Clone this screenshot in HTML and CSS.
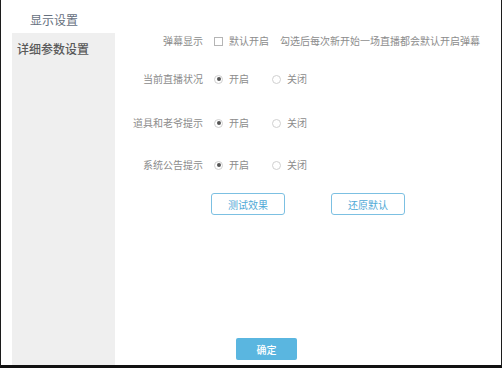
FILE: index.html
```html
<!DOCTYPE html>
<html lang="zh-CN">
<head>
    <meta charset="UTF-8">
    <title>显示设置</title>
    <link rel="stylesheet" href="styles.css">
</head>
<body>
    <div class="ventana">
        <div class="titulo-tab">显示设置</div>
        <div class="panel">
            <aside class="lateral">
                <div class="item-lateral">详细参数设置</div>
            </aside>
            <main class="contenido">
                <div class="fila">
                    <span class="etiqueta">弹幕显示</span>
                    <label class="opcion"><span class="check"></span>默认开启</label>
                    <span class="ayuda">勾选后每次新开始一场直播都会默认开启弹幕</span>
                </div>
                <div class="fila fila-2">
                    <span class="etiqueta">当前直播状况</span>
                    <label class="opcion radio-op"><span class="radio activo"></span>开启</label>
                    <label class="opcion"><span class="radio"></span>关闭</label>
                </div>
                <div class="fila fila-3">
                    <span class="etiqueta">道具和老爷提示</span>
                    <label class="opcion radio-op"><span class="radio activo"></span>开启</label>
                    <label class="opcion"><span class="radio"></span>关闭</label>
                </div>
                <div class="fila fila-4">
                    <span class="etiqueta">系统公告提示</span>
                    <label class="opcion radio-op"><span class="radio activo"></span>开启</label>
                    <label class="opcion"><span class="radio"></span>关闭</label>
                </div>
                <div class="acciones">
                    <button class="boton-linea">测试效果</button>
                    <button class="boton-linea">还原默认</button>
                </div>
                <div class="pie">
                    <button class="boton-ok">确定</button>
                </div>
            </main>
        </div>
    </div>
</body>
</html>
```

FILE: styles.css
```css
:root {
    --color-lateral: #efefef;
    --color-texto: #8c8c8c;
    --color-azul: #4fa9d6;
    --color-ok: #5ab6e0;
    --fuente: "Noto Sans CJK SC", "Noto Sans", sans-serif;
}

* {
    margin: 0; padding: 0; box-sizing: border-box;
}

body {
    font-family: var(--fuente);
    background: #fff;
}

.ventana {
    width: 502px; height: 368px;
    border-left: 1px solid #1c1c1c;
    border-right: 1px solid #1c1c1c;
    border-bottom: 3px solid #111;
    display: flex; flex-direction: column;
    background: #fff;
}

.titulo-tab {
    height: 33px; padding: 11px 0 0 29px;
    font-size: 12px; line-height: 18px;
    color: #66707e;
}

.panel {
    flex: 1; display: flex;
}

.lateral {
    width: 103px; margin-left: 11px;
    background: var(--color-lateral);
}

.item-lateral {
    padding: 7px 0 0 5px;
    font-size: 12px; line-height: 17px; font-weight: 500;
    color: #5a5a5a;
}

.contenido {
    flex: 1; display: flex; flex-direction: column;
    font-size: 10px; color: var(--color-texto);
}

.fila {
    display: flex; align-items: center;
    height: 16px; line-height: 16px;
}
.fila-2 { margin-top: 22px; }
.fila-3 { margin-top: 28px; }
.fila-4 { margin-top: 26px; }

.etiqueta {
    width: 88px; text-align: right;
    margin-right: 11px; white-space: nowrap;
}

.opcion {
    display: flex; align-items: center; gap: 6px;
}
.radio-op { width: 58px; }

.check {
    width: 9px; height: 9px;
    border: 1px solid #b5b5b5; background: #fff;
}

.radio {
    width: 9px; height: 9px; border-radius: 50%;
    border: 1px solid #d0d0d0; background: #fff;
    display: flex; align-items: center; justify-content: center;
}
.radio.activo::after {
    content: ""; width: 4px; height: 4px; border-radius: 50%;
    background: #555;
}

.ayuda {
    margin-left: 11px; white-space: nowrap;
}

.acciones {
    display: flex; gap: 46px;
    margin: 20px 0 0 96px;
}

.boton-linea {
    width: 74px; height: 22px;
    border: 1px solid #7cc0e2; border-radius: 3px;
    background: #fff; color: var(--color-azul);
    font-family: var(--fuente); font-size: 10px;
}

.pie {
    margin-top: auto; padding: 0 0 5px 121px;
}

.boton-ok {
    width: 61px; height: 22px;
    border: none; border-radius: 2px;
    background: var(--color-ok); color: #fff;
    font-family: var(--fuente); font-size: 10px; font-weight: 500;
}
```
